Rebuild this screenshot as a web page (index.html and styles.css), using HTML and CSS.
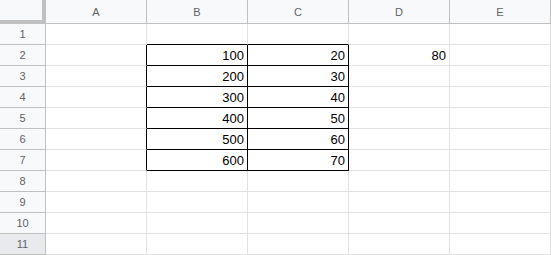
FILE: index.html
```html
<!DOCTYPE html>
<html lang="en">
<head>
  <meta charset="UTF-8">
  <title>Sheet</title>
  <link rel="stylesheet" href="styles.css">
</head>
<body>
  <div class="grid">
    <div class="corner"></div>
    <div class="col-head">A</div>
    <div class="col-head">B</div>
    <div class="col-head">C</div>
    <div class="col-head">D</div>
    <div class="col-head">E</div>

    <div class="row-head">1</div>
    <div class="cell"></div>
    <div class="cell edge-b"></div>
    <div class="cell edge-b"></div>
    <div class="cell"></div>
    <div class="cell"></div>

    <div class="row-head">2</div>
    <div class="cell edge-r"></div>
    <div class="cell box">100</div>
    <div class="cell box">20</div>
    <div class="cell">80</div>
    <div class="cell"></div>

    <div class="row-head">3</div>
    <div class="cell edge-r"></div>
    <div class="cell box">200</div>
    <div class="cell box">30</div>
    <div class="cell"></div>
    <div class="cell"></div>

    <div class="row-head">4</div>
    <div class="cell edge-r"></div>
    <div class="cell box">300</div>
    <div class="cell box">40</div>
    <div class="cell"></div>
    <div class="cell"></div>

    <div class="row-head">5</div>
    <div class="cell edge-r"></div>
    <div class="cell box">400</div>
    <div class="cell box">50</div>
    <div class="cell"></div>
    <div class="cell"></div>

    <div class="row-head">6</div>
    <div class="cell edge-r"></div>
    <div class="cell box">500</div>
    <div class="cell box">60</div>
    <div class="cell"></div>
    <div class="cell"></div>

    <div class="row-head">7</div>
    <div class="cell edge-r"></div>
    <div class="cell box">600</div>
    <div class="cell box">70</div>
    <div class="cell"></div>
    <div class="cell"></div>

    <div class="row-head">8</div>
    <div class="cell"></div>
    <div class="cell"></div>
    <div class="cell"></div>
    <div class="cell"></div>
    <div class="cell"></div>

    <div class="row-head">9</div>
    <div class="cell"></div>
    <div class="cell"></div>
    <div class="cell"></div>
    <div class="cell"></div>
    <div class="cell"></div>

    <div class="row-head">10</div>
    <div class="cell"></div>
    <div class="cell"></div>
    <div class="cell"></div>
    <div class="cell"></div>
    <div class="cell"></div>

    <div class="row-head active">11</div>
    <div class="cell"></div>
    <div class="cell"></div>
    <div class="cell"></div>
    <div class="cell"></div>
    <div class="cell"></div>
  </div>
</body>
</html>
```

FILE: styles.css
```css
body {
  margin: 0;
  background-color: white;
  font-family: "Liberation Sans", Arial, sans-serif;
}

.grid {
  display: grid;
  grid-template-columns: 46px repeat(5, 101px);
  grid-template-rows: 24px repeat(11, 21px);
  width: 551px;
  height: 255px;
  overflow: hidden;
}

.corner {
  background-color: #f8f9fa;
  border-right: 4px solid #c0c0c0;
  border-bottom: 4px solid #c0c0c0;
}

.col-head {
  background-color: #f8f9fa;
  border-right: 1px solid #c0c0c0;
  border-bottom: 1px solid #c0c0c0;
  color: #5f6368;
  font-size: 11px;
  display: flex;
  align-items: center;
  justify-content: center;
  padding-top: 1px;
}

.row-head {
  background-color: #f8f9fa;
  border-right: 1px solid #c0c0c0;
  border-bottom: 1px solid #c0c0c0;
  color: #5f6368;
  font-size: 11px;
  display: flex;
  align-items: center;
  justify-content: center;
}

.row-head.active {
  background-color: #e8eaed;
}

.cell {
  border-right: 1px solid #e2e2e2;
  border-bottom: 1px solid #e2e2e2;
  font-size: 13px;
  color: #000;
  display: flex;
  align-items: center;
  justify-content: flex-end;
  padding-right: 3px;
}

.cell.edge-b {
  border-bottom-color: #000;
}

.cell.edge-r {
  border-right-color: #000;
}

.cell.box {
  border-right-color: #000;
  border-bottom-color: #000;
}
```
